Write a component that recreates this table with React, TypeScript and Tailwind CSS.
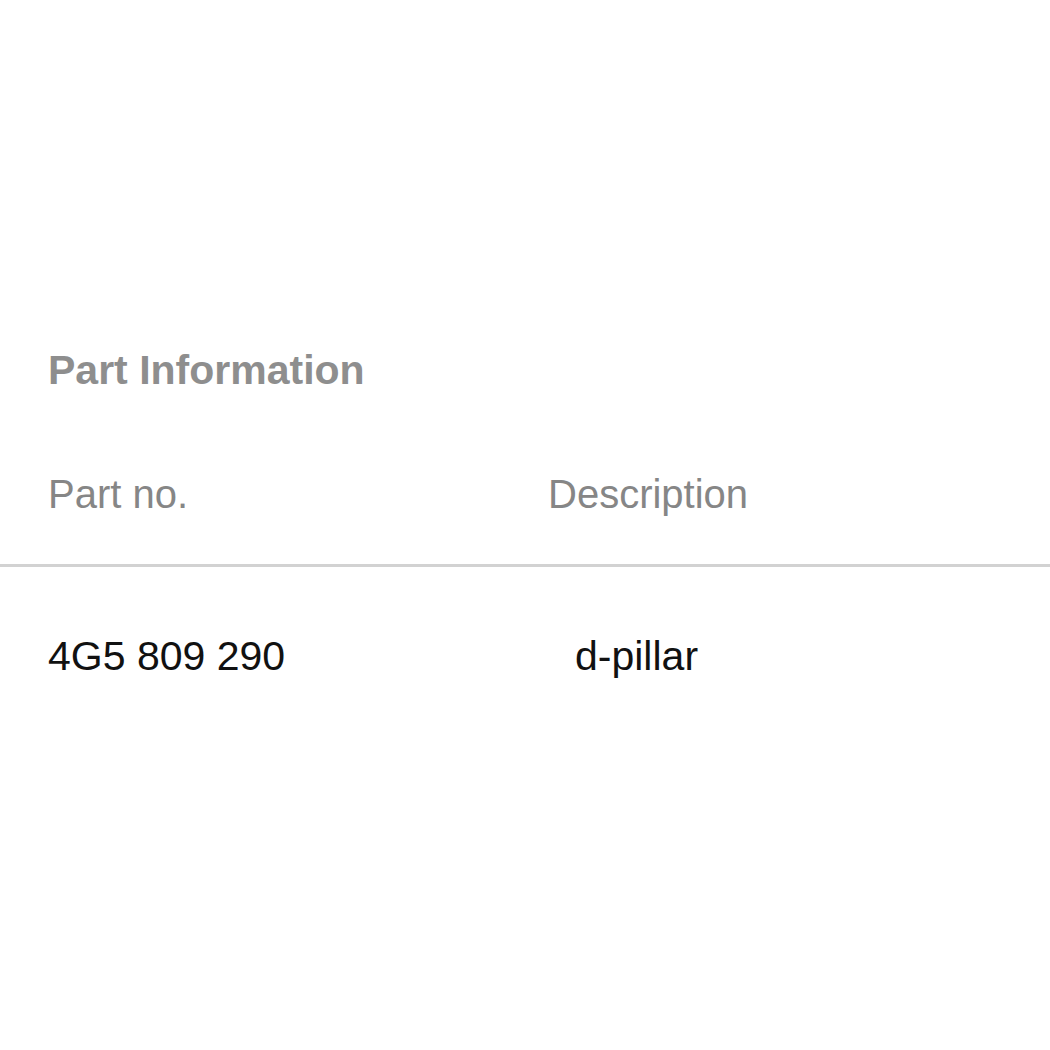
export default function App() {
  return (
    <div className="w-[1050px] h-[1050px] bg-white font-['Liberation_Sans',Arial,sans-serif]">
      <div className="pt-[346px]">
        {/* Section title */}
        <h2 className="pl-[48px] h-[48px] leading-[48px] text-[41px] font-bold text-[#8e8e8e]">
          Part Information
        </h2>

        {/* Table header */}
        <div className="mt-[76px] flex pl-[48px] h-[48px] items-center text-[40px] text-[#868686]">
          <div className="w-[500px]">Part no.</div>
          <div>Description</div>
        </div>

        <div className="mt-[46px] h-[3px] bg-[#d2d2d2]" />

        {/* Table row */}
        <div className="mt-[66px] flex pl-[48px] h-[48px] items-center text-[41px] text-[#111]">
          <div className="w-[527px]">4G5 809 290</div>
          <div>d-pillar</div>
        </div>
      </div>
    </div>
  );
}
